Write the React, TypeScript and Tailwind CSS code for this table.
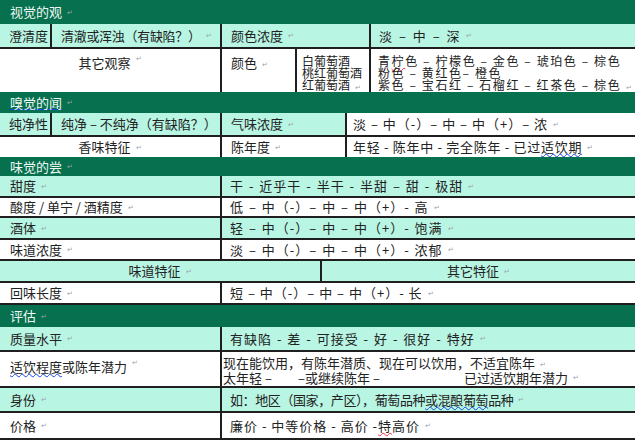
import React from "react";

// 品酒记录表
const dark = "bg-[#07704f]";
const cyan = "bg-[#b8f5e3]";

function Mark() {
  return <span className="ml-[5px] text-[7px] text-gray-400 align-middle tracking-normal">↵</span>;
}

function Band({ title, cls }: { title: React.ReactNode; cls: string }) {
  return (
    <div className={`flex items-center px-[10px] text-[13px] text-[#eef8f2] ${dark} ${cls}`}>
      {title}
      <Mark />
    </div>
  );
}

function Row2({
  label,
  value,
  cls,
  vcls = "",
}: {
  label: React.ReactNode;
  value: React.ReactNode;
  cls: string;
  vcls?: string;
}) {
  return (
    <div className={`flex border-b-2 border-[#1f1f1f] ${cls}`}>
      <div className="w-[220px] flex items-center px-[10px] whitespace-nowrap">
        {label}
        <Mark />
      </div>
      <div className={`flex-1 flex items-center border-l-2 border-[#1f1f1f] px-[8px] whitespace-nowrap ${vcls}`}>
        {value}
        <Mark />
      </div>
    </div>
  );
}

export default function App() {
  return (
    <div className="w-[640px] h-[440px] bg-white overflow-hidden font-['Noto_Sans_CJK_SC','Noto_Sans',sans-serif] text-[13px] text-[#222]">
      <div className="w-[635px]">
        {/* 视觉的观 */}
        <Band title="视觉的观" cls="h-[24px]" />
        <div className={`flex h-[25px] border-b-2 border-[#1f1f1f] ${cyan}`}>
          <div className="w-[50px] flex items-center pl-[9px] whitespace-nowrap">澄清度</div>
          <div className="w-[170px] flex items-center border-l-2 border-[#1f1f1f] pl-[9px] whitespace-nowrap tracking-[-0.3px]">
            清澈或浑浊（有缺陷？）<Mark />
          </div>
          <div className="w-[149px] flex items-center border-l-2 border-[#1f1f1f] pl-[9px]">
            颜色浓度<Mark />
          </div>
          <div className="flex-1 flex items-center border-l-2 border-[#1f1f1f] pl-[8px] whitespace-nowrap tracking-[1px] [word-spacing:2px]">
            淡 – 中 – 深<Mark />
          </div>
        </div>
        <div className="flex h-[43px]">
          <div className="w-[220px] flex justify-center pt-[4px]">
            其它观察<Mark />
          </div>
          <div className="w-[75px] border-l-2 border-[#1f1f1f] pl-[9px] pt-[4px]">
            颜色<Mark />
          </div>
          <div className="w-[74px] border-l-2 border-[#1f1f1f] pl-[5px] pt-[6px] text-[12px] leading-[12px] whitespace-nowrap">
            <div>白葡萄酒</div>
            <div>桃红葡萄酒</div>
            <div>红葡萄酒<Mark /></div>
          </div>
          <div className="flex-1 border-l-2 border-[#1f1f1f] pl-[7px] pt-[6px] text-[12px] leading-[12px] whitespace-nowrap tracking-[1.6px]">
            <div>
              青<span className="underline decoration-wavy decoration-red-500 decoration-1">柠</span>色 – 柠檬色 – 金色 – 琥珀色 – 棕色
            </div>
            <div>粉色 – 黄红色– 橙色</div>
            <div>紫色 – 宝石红 – 石榴红 – 红茶色 – 棕色<Mark /></div>
          </div>
        </div>

        {/* 嗅觉的闻 */}
        <Band
          title={<span className="underline decoration-blue-700">嗅觉的闻</span>}
          cls="h-[21px]"
        />
        <div className="flex h-[24px] border-b-2 border-[#1f1f1f]">
          <div className={`w-[50px] flex items-center pl-[9px] whitespace-nowrap ${cyan}`}>纯净性</div>
          <div className={`w-[170px] flex items-center border-l-2 border-[#1f1f1f] pl-[9px] whitespace-nowrap ${cyan}`}>
            纯净 – 不纯净（有缺陷？）
          </div>
          <div className={`w-[125px] flex items-center border-l-2 border-[#1f1f1f] pl-[9px] ${cyan}`}>
            气味浓度<Mark />
          </div>
          <div className="flex-1 flex items-center border-l-2 border-[#1f1f1f] pl-[6px] whitespace-nowrap tracking-[1px]">
            淡 – 中（-）– 中 – 中（+）– 浓<Mark />
          </div>
        </div>
        <div className="flex h-[20px]">
          <div className="w-[220px] flex items-center justify-center">
            香味特征<Mark />
          </div>
          <div className="w-[125px] flex items-center border-l-2 border-[#1f1f1f] pl-[9px]">
            陈年度<Mark />
          </div>
          <div className="flex-1 flex items-center border-l-2 border-[#1f1f1f] pl-[6px] whitespace-nowrap tracking-[0.7px]">
            年轻 - 陈年中 - 完全陈年 - 已过<span className="underline decoration-wavy decoration-blue-700 decoration-1">适饮期</span>
            <Mark />
          </div>
        </div>

        {/* 味觉的尝 */}
        <Band title="味觉的尝" cls="h-[19px]" />
        <Row2
          cls={`h-[22px] ${cyan}`}
          vcls="tracking-[1px] [word-spacing:1px]"
          label="甜度"
          value="干 - 近乎干 - 半干 - 半甜 – 甜 - 极甜"
        />
        <Row2
          cls="h-[20px]"
          vcls="tracking-[1px] [word-spacing:1px]"
          label="酸度 / 单宁 / 酒精度"
          value="低 – 中（-）– 中 – 中（+）- 高"
        />
        <Row2
          cls={`h-[22px] ${cyan}`}
          vcls="tracking-[1px] [word-spacing:1px]"
          label="酒体"
          value="轻 – 中（-）– 中 – 中（+）- 饱满"
        />
        <Row2
          cls="h-[21px]"
          vcls="tracking-[1px] [word-spacing:1px]"
          label="味道浓度"
          value="淡 – 中（-）– 中 – 中（+）- 浓郁"
        />
        <div className={`flex h-[22px] border-b-2 border-[#1f1f1f] ${cyan}`}>
          <div className="w-[320px] flex items-center justify-center">
            味道特征<Mark />
          </div>
          <div className="flex-1 flex items-center justify-center border-l-2 border-[#1f1f1f]">
            其它特征<Mark />
          </div>
        </div>
        <Row2
          cls="h-[22px]"
          vcls="tracking-[1px]"
          label="回味长度"
          value="短 – 中（-）– 中 – 中（+）- 长"
        />

        {/* 评估 */}
        <Band title="评估" cls="h-[22px]" />
        <Row2
          cls={`h-[25px] ${cyan}`}
          vcls="tracking-[1px] [word-spacing:1px]"
          label="质量水平"
          value="有缺陷 - 差 - 可接受 - 好 - 很好 - 特好"
        />
        <div className="flex h-[36px] border-b-2 border-[#1f1f1f]">
          <div className="w-[220px] flex items-start pt-[5px] px-[10px] whitespace-nowrap">
            <span className="underline decoration-wavy decoration-blue-700 decoration-1">适饮程度</span>或陈年潜力
            <Mark />
          </div>
          <div className="flex-1 border-l-2 border-[#1f1f1f] pl-[1px] pt-[4px] leading-[13px] whitespace-nowrap">
            <div>
              现在能饮用，有陈年潜质、现在可以饮用，不适宜陈年<Mark />
            </div>
            <div className="flex">
              <span className="w-[75px]">太年轻 –</span>
              <span className="w-[166px]">–或继续陈年 –</span>
              <span>已过适饮期年潜力</span>
              <Mark />
            </div>
          </div>
        </div>
        <Row2
          cls={`h-[25px] ${cyan}`}
          vcls="tracking-[-0.4px]"
          label="身份"
          value={
            <>
              如：地区（国家，产区），葡萄品种<span className="underline decoration-wavy decoration-blue-700 decoration-1">或混酿葡萄</span>品种
            </>
          }
        />
        <Row2
          cls="h-[27px]"
          vcls="tracking-[1px]"
          label="价格"
          value={
            <>
              廉价 - 中等价格 - 高价 - <span className="underline decoration-wavy decoration-red-500 decoration-1">特</span>高价
            </>
          }
        />
      </div>
    </div>
  );
}
